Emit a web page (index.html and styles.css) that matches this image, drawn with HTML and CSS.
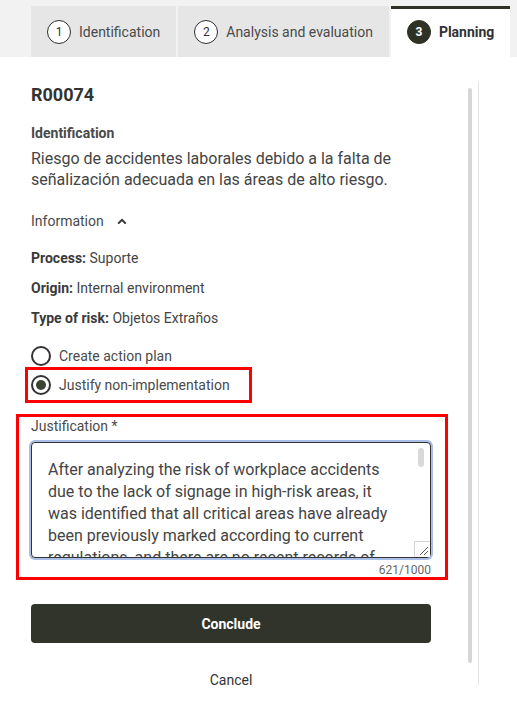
FILE: index.html
```html
<!DOCTYPE html>
<html lang="en">
<head>
<meta charset="UTF-8" />
<meta name="viewport" content="width=device-width, initial-scale=1" />
<title>Risk planning</title>
<link rel="stylesheet" href="styles.css">
</head>
<body>
  <div class="steps">
    <div class="step">
      <span class="step-num">1</span>
      <span class="step-label">Identification</span>
    </div>
    <div class="step">
      <span class="step-num">2</span>
      <span class="step-label">Analysis and evaluation</span>
    </div>
    <div class="step active">
      <span class="step-num">3</span>
      <span class="step-label">Planning</span>
    </div>
  </div>

  <div class="panel">
    <div class="content">
      <h2 class="code">R00074</h2>

      <p class="section-label">Identification</p>
      <p class="description">Riesgo de accidentes laborales debido a la falta de señalización adecuada en las áreas de alto riesgo.</p>

      <button class="toggle" type="button">
        Information
        <svg width="10" height="7" viewBox="0 0 10 7"><polyline points="1.2,5.6 5,1.8 8.8,5.6" fill="none" stroke="#333" stroke-width="2"/></svg>
      </button>

      <div class="info">
        <p><b>Process:</b> Suporte</p>
        <p><b>Origin:</b> Internal environment</p>
        <p><b>Type of risk:</b> Objetos Extraños</p>
      </div>

      <div class="choices">
        <label class="choice">
          <input type="radio" name="plan" value="create">
          <span class="dot"></span>
          Create action plan
        </label>
        <label class="choice highlight">
          <input type="radio" name="plan" value="justify" checked>
          <span class="dot"></span>
          Justify non-implementation
        </label>
      </div>

      <div class="field highlight-box">
        <label class="field-label" for="justification">Justification *</label>
        <div class="input-wrap">
          <textarea id="justification" class="field-input" maxlength="1000">After analyzing the risk of workplace accidents due to the lack of signage in high-risk areas, it was identified that all critical areas have already been previously marked according to current regulations, and there are no recent records of incidents related to this cause. In addition, periodic inspections carried out by the safety team confirm that the existing signs are visible, legible and in good condition. Therefore, implementing a new action plan is not considered necessary at this time, since the current controls are effective and the residual risk is acceptable. The situation will be monitored in the next review.</textarea>
          <span class="ta-thumb"></span>
          <span class="ta-corner">
            <svg width="15" height="15" viewBox="0 0 15 15"><path d="M13 5 L5 13 M13 9 L9 13" stroke="#555" stroke-width="1"/></svg>
          </span>
        </div>
        <div class="counter">621/1000</div>
      </div>

      <button class="btn-primary" type="button">Conclude</button>
      <button class="btn-link" type="button">Cancel</button>
    </div>
    <div class="scroll-thumb"></div>
  </div>
</body>
</html>
```

FILE: styles.css
```css
body {
  margin: 0;
  font-family: Roboto, "Liberation Sans", Arial, sans-serif;
  color: #3b3b3b;
  background: #fff;
}

/* Step tabs */
.steps {
  display: flex;
  gap: 2px;
  height: 51px;
  padding: 6px 0 0 31px;
  background: #f2f2f2;
}

.step {
  display: flex;
  align-items: center;
  gap: 8px;
  padding: 0 16px;
  background: #e6e6e6;
  font-size: 14px;
  color: #4a4a4a;
}

.step-num {
  display: flex;
  align-items: center;
  justify-content: center;
  width: 22px;
  height: 22px;
  border: 1px solid #2f2f2f;
  border-radius: 50%;
  background: #fff;
  font-size: 12px;
  color: #333;
}

.step.active {
  background: #fff;
  border-top: 3px solid #2e3125;
  padding-bottom: 3px;
  font-weight: 700;
  color: #333;
}

.step.active .step-num {
  background: #2e3125;
  border-color: #2e3125;
  color: #fff;
}

/* Panel with its scrollbar */
.panel {
  display: flex;
  align-items: flex-start;
  width: 478px;
  height: 603px;
  margin-top: 25px;
  border-right: 1px solid #e6e6e6;
}

.scroll-thumb {
  flex: none;
  width: 4px;
  height: 575px;
  margin: 6px 0 0 37px;
  border-radius: 2px;
  background: #d6d6d6;
}

.content {
  flex: none;
  width: 400px;
  padding-left: 31px;
}

.code {
  margin: 0;
  font-size: 18px;
  line-height: 26px;
  font-weight: 700;
  color: #333;
}

.section-label {
  margin: 16px 0 0;
  font-size: 14px;
  line-height: 18px;
  font-weight: 700;
  color: #4a4a4a;
}

.description {
  margin: 6px 0 0;
  font-size: 16px;
  line-height: 21px;
  color: #444;
}

.toggle {
  display: flex;
  align-items: center;
  gap: 13px;
  margin-top: 21px;
  padding: 0;
  border: 0;
  background: none;
  font: inherit;
  font-size: 14px;
  line-height: 20px;
  color: #4a4a4a;
}

.info {
  margin-top: 17px;
}

.info p {
  margin: 0 0 10px;
  font-size: 14px;
  line-height: 20px;
  color: #444;
}

.info b {
  color: #3a3a3a;
}

.choices {
  display: flex;
  flex-direction: column;
  align-items: flex-start;
  gap: 5px;
  margin-top: 16px;
}

.choice {
  display: inline-flex;
  align-items: center;
  gap: 8px;
  height: 24px;
  font-size: 14px;
  color: #4a4a4a;
}

.choice input {
  display: none;
}

.dot {
  width: 16px;
  height: 16px;
  border: 2px solid #333;
  border-radius: 50%;
  display: flex;
  align-items: center;
  justify-content: center;
}

.choice input:checked + .dot::after {
  content: "";
  width: 10px;
  height: 10px;
  border-radius: 50%;
  background: #3b4430;
}

.highlight {
  padding-right: 16px;
  outline: 3px solid #ff0000;
  outline-offset: 3px;
}

/* Justification field */
.field {
  margin: 23px -14px 0 -12px;
  padding: 0 14px 0 12px;
}

.highlight-box {
  outline: 3px solid #ff0000;
}

.field-label {
  display: block;
  margin-top: -3px;
  font-size: 14px;
  line-height: 18px;
  color: #4a4a4a;
}

.input-wrap {
  position: relative;
  margin-top: 7px;
}

.field-input {
  display: block;
  box-sizing: border-box;
  width: 400px;
  height: 116px;
  padding: 16px 32px 0 16px;
  border: 1px solid #333;
  border-radius: 4px;
  box-shadow: 0 0 0 2px #a9bfe8;
  outline: none;
  font-family: inherit;
  font-size: 16px;
  line-height: 22px;
  color: #444;
  resize: none;
  overflow: hidden;
}

.ta-thumb {
  position: absolute;
  top: 6px;
  left: 387px;
  width: 6px;
  height: 19px;
  border-radius: 3px;
  background: #d9d9d9;
}

.ta-corner {
  position: absolute;
  right: 1px;
  bottom: 1px;
  width: 15px;
  height: 15px;
  border-left: 1px solid #d4d4d4;
  border-top: 1px solid #d4d4d4;
  background: #fff;
}

.ta-corner svg {
  display: block;
}

.counter {
  margin-top: 5px;
  text-align: right;
  font-size: 12px;
  line-height: 14px;
  color: #666;
}

.btn-primary {
  display: block;
  width: 400px;
  height: 39px;
  margin-top: 27px;
  border: 0;
  border-radius: 4px;
  background: #31342a;
  font-family: inherit;
  font-size: 14px;
  font-weight: 700;
  color: #fff;
}

.btn-link {
  display: block;
  width: 400px;
  margin-top: 27px;
  padding: 0;
  border: 0;
  background: none;
  font-family: inherit;
  font-size: 14px;
  line-height: 20px;
  color: #333;
}
```
